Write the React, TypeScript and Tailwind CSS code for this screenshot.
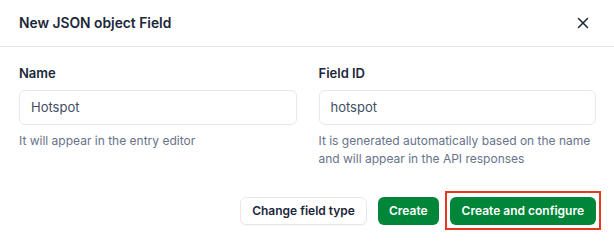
import { X } from 'lucide-react';

const font = { fontFamily: 'Inter, "Noto Sans", sans-serif' };

function Field({ label, value, help }: { label: string; value: string; help: string }) {
  return (
    <div className="flex-1 min-w-0">
      <label className="block text-[13px] font-semibold text-[#1b273a] leading-none mt-[1px]">{label}</label>
      <div className="mt-[10px] h-[35px] rounded-[6px] border border-[#e5e8ed] bg-white flex items-center px-[11px] text-[13px] text-[#414d63]">
        {value}
      </div>
      <p className="mt-[7px] text-[12px] leading-[18px] text-[#67728a]">{help}</p>
    </div>
  );
}

export default function App() {
  return (
    <div className="w-[614px] h-[247px] bg-white overflow-hidden" style={font}>
      {/* Header */}
      <div className="h-[47px] flex items-center justify-between pl-[19px] pr-[22px] border-b border-[#e5e8ed]">
        <h2 className="text-[13.8px] font-semibold text-[#1b273a]">New JSON object Field</h2>
        <X size={18} strokeWidth={2} className="text-[#1b273a]" />
      </div>

      {/* Body */}
      <div className="flex gap-[22px] pl-[19px] pr-[18px] pt-[19px]">
        <Field label="Name" value="Hotspot" help="It will appear in the entry editor" />
        <Field
          label="Field ID"
          value="hotspot"
          help="It is generated automatically based on the name and will appear in the API responses"
        />
      </div>

      {/* Footer */}
      <div className="flex justify-end gap-[11px] pr-[18px] mt-[29px]">
        <button className="h-[28px] px-[11px] rounded-[6px] border border-[#e5e8ed] bg-white text-[12px] font-semibold text-[#1b273a] shadow-[0_1px_0_rgba(0,0,0,0.03)]">
          Change field type
        </button>
        <button className="h-[28px] px-[11px] rounded-[6px] bg-[#008539] text-[12px] font-semibold text-white">
          Create
        </button>
        <span className="relative flex">
          <span className="absolute -inset-x-[5px] -top-[6px] -bottom-[5px] border-[2.5px] border-[#e8371f]" />
          <button className="h-[28px] px-[12px] rounded-[6px] bg-[#008539] text-[12px] font-semibold text-white">
            Create and configure
          </button>
        </span>
      </div>
    </div>
  );
}
